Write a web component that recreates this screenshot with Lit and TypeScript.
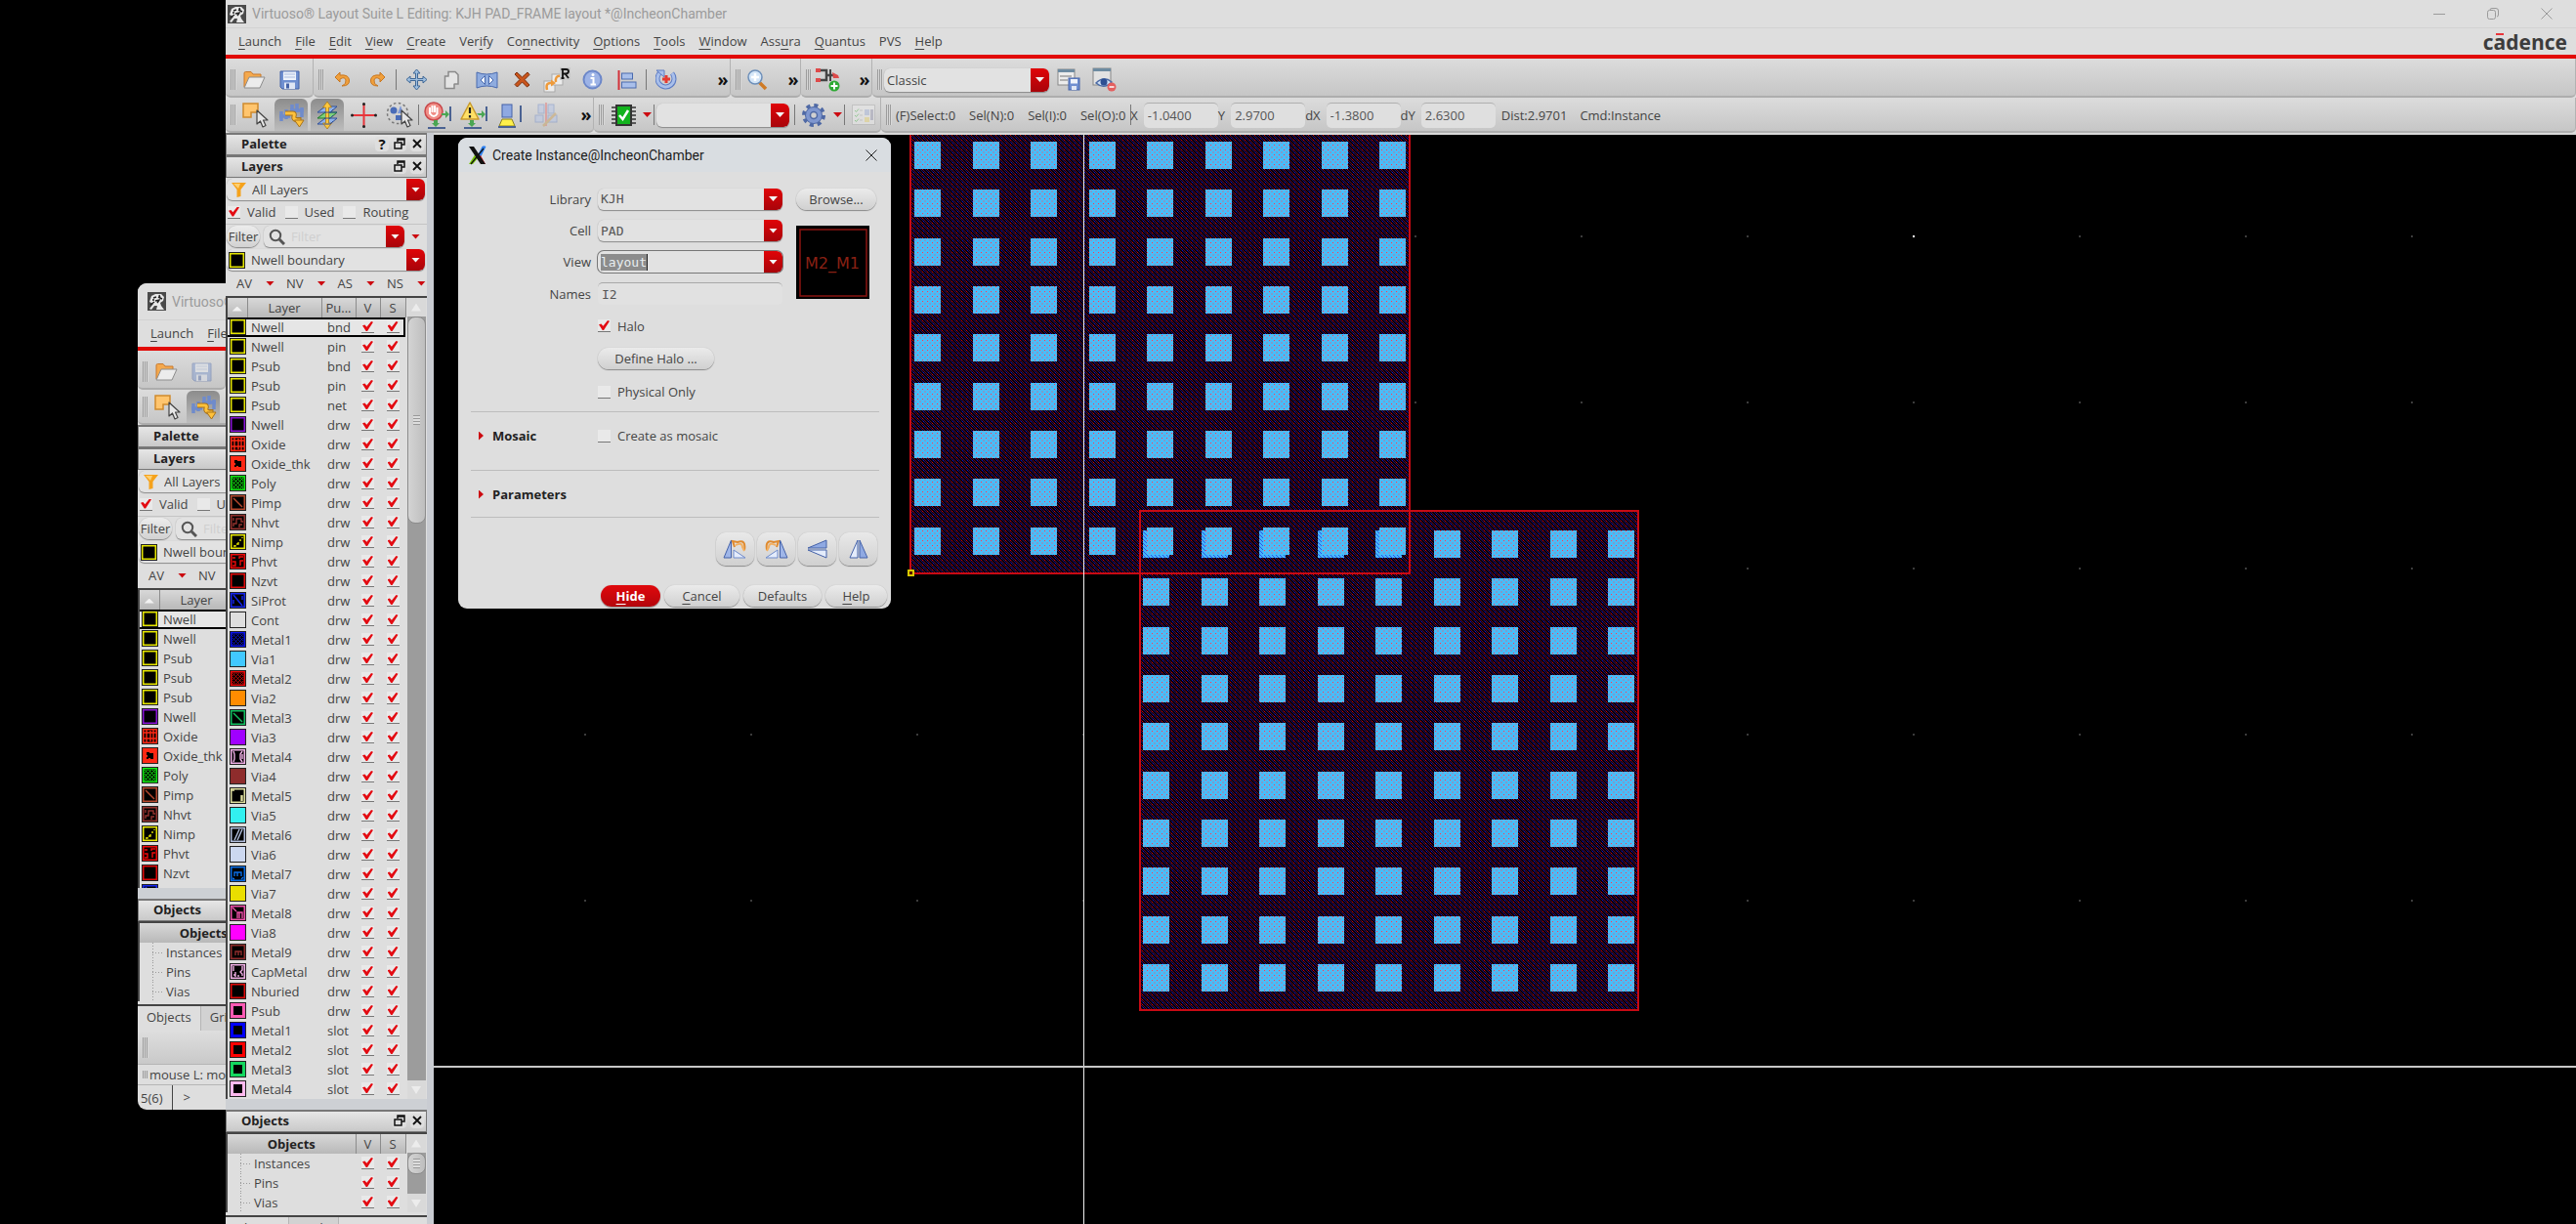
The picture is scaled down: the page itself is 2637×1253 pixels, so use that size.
import { LitElement, html, css, svg, nothing } from "lit";
import { customElement, property } from "lit/decorators.js";
import { classMap } from "lit/directives/class-map.js";

/* ---------- shared look ---------- */

const shared = css`
  * { box-sizing: border-box; }
  button, input, select {
    font: inherit;
    color: inherit;
    margin: 0;
    padding: 0;
    border: 0;
    background: none;
    border-radius: 0;
    appearance: none;
    outline: none;
  }
  svg { display: block; flex: none; }
  u { text-decoration: underline; text-underline-offset: 3px; }
  .combo {
    display: flex;
    height: 22px;
    border-radius: 6px;
    background: #e2e2e2;
    box-shadow: 0 1px 1px #8a8a8a, 0 0 1px #b5b5b5;
    overflow: hidden;
    align-items: center;
  }
  .combo > select, .combo > input { flex: 1; min-width: 0; height: 22px; }
  .drop {
    width: 19px;
    height: 22px;
    flex: none;
    display: grid;
    place-items: center;
    border-radius: 0 5px 5px 0;
    background: linear-gradient(#e00408, #a8040a);
  }
  .drop::before {
    content: "";
    width: 9px;
    height: 5px;
    background: #f4f4f4;
    clip-path: polygon(0 0, 100% 0, 50% 100%);
  }
  .tri {
    display: inline-block;
    width: 9px;
    height: 5px;
    background: #cc0a10;
    clip-path: polygon(0 0, 100% 0, 50% 100%);
    flex: none;
  }
  input[type="checkbox"] {
    width: 13px;
    height: 13px;
    flex: none;
    background: #e9e9e9;
    border-bottom: 1px solid #777;
    display: grid;
    place-items: center;
    overflow: visible;
  }
  input[type="checkbox"]:checked::before {
    content: "";
    width: 11px;
    height: 10px;
    background: #e30b12;
    clip-path: polygon(0 42%, 22% 34%, 40% 58%, 82% 0, 100% 8%, 46% 100%, 34% 100%);
  }
`;

/* A menu caption; the character after "_" is its mnemonic. */
const mnemonic = (s: string) => {
  const i = s.indexOf("_");
  return i < 0 ? s : html`${s.slice(0, i)}<u>${s[i + 1]}</u>${s.slice(i + 2)}`;
};

const ic = (w: number, h: number, body: unknown) =>
  html`<svg width=${w} height=${h} viewBox="0 0 ${w} ${h}" aria-hidden="true">${body}</svg>`;

const cursor = (x: number, y: number) => svg`
  <path transform="translate(${x} ${y})" d="M0 0V14L3.5 11 6 17 9 15.5 6.5 10H11Z" fill="#e6e6e6" stroke="#444" stroke-width="1.2" stroke-linejoin="round"/>`;

const icons = {
  app: ic(19, 19, svg`<rect width="19" height="19" fill="#4a4a4a"/>
    <path d="M2 10L4 4 8 2 14 2 17 5 16 9 13 11 14 14 17 18H9L10 14 7 14 4 18 2 17 6 12Z" fill="#e8e8e8"/>
    <path d="M6 6L9 5M11 5L15 7M8 9L12 8 10 11M3 13L7 10M12 3L13 6M5 8L7 8" stroke="#222" stroke-width="1.4" fill="none"/>`),
  open: ic(24, 20, svg`<path d="M2 17V3Q2 1.500 3.500 1.500H9L11 4H19V8" fill="#f4a94e" stroke="#c9792b"/>
    <path d="M2 18L7 7H23L18 18Z" fill="#ececec" stroke="#8d8d8d"/>`),
  save: ic(21, 20, svg`<path d="M1 1H20V19H3L1 17Z" fill="#6f8fd0" stroke="#4562a8"/>
    <rect x="4" y="1.500" width="13" height="8.500" fill="#eef2fa"/><path d="M5 4H16M5 7H16" stroke="#a9bbdf"/>
    <rect x="5" y="12.500" width="11" height="6.500" fill="#dfe6f4"/><rect x="7" y="13.500" width="3" height="5" fill="#4562a8"/>`),
  undo: ic(17, 17, svg`<path d="M6 1L1 6 6 11V8Q11 5 12 9T8 15Q16 15 15.500 9T6 4Z" fill="#f0a03c" stroke="#c77722"/>`),
  redo: ic(17, 17, svg`<path d="M11 1L16 6 11 11V8Q6 5 5 9T9 15Q1 15 1.500 9T11 4Z" fill="#f0a03c" stroke="#c77722"/>`),
  move: ic(23, 23, svg`<path d="M11.500 1L15 5H12.500V10.500H18V8L22 11.500 18 15V12.500H12.500V18H15L11.500 22 8 18H10.500V12.500H5V15L1 11.500 5 8V10.500H10.500V5H8Z" fill="#9fbfe0" stroke="#3f6795"/>`),
  copy: ic(17, 20, svg`<path d="M5 1.500H12L15 4.500V14H5Z" fill="#e4e4e4" stroke="#8a8a8a" stroke-width="1.500"/>
    <path d="M5 6H1.500V18.500H11V14" fill="#e4e4e4" stroke="#8a8a8a" stroke-width="1.500"/>`),
  stretch: ic(23, 18, svg`<path d="M1 1Q11 5 22 1V17Q11 13 1 17Z" fill="#8facdf" stroke="#4a6aae"/>
    <path d="M9.500 4.500V13.500L5 9ZM13.500 4.500V13.500L18 9Z" fill="#eef3fc" stroke="#4a6aae"/>`),
  del: ic(17, 17, svg`<path d="M3 1L8.500 6 14 1 16 3.500 11 8.500 16 14 13.500 16 8.500 11 3.500 16 1 13.500 6 8.500 1 3Z" fill="#c9551c" stroke="#7c2d0a"/>`),
  rot: ic(29, 28, svg`<rect x="1" y="15" width="11" height="11" fill="#ececec" stroke="#aaa"/>
    <rect x="9" y="8" width="11" height="11" fill="#ececec" stroke="#aaa"/>
    <path d="M4 24Q2 16 9 17M13 16Q12 9 18 10" stroke="#ee9a3a" stroke-width="2.500" fill="none"/>
    <path d="M8 13.500L13 17 8 20.500ZM17 6.500L22 10 17 13.500Z" fill="#ee9a3a"/>
    <rect x="17" y="1" width="11" height="13" fill="#c9c9c9"/><path d="M20 12V3M18.500 3H23.500Q26 3 26 5T23.500 7.500H20M22.500 7.500L26 12M18.500 12H21.500" stroke="#111" stroke-width="1.800" fill="none"/>`),
  info: ic(21, 21, svg`<circle cx="10.500" cy="10.500" r="9" fill="#9db3e6" stroke="#6c87c9" stroke-width="2"/>
    <path d="M8.500 9H11.500V15.500M8.500 15.500H14" stroke="#fff" stroke-width="2" fill="none"/><circle cx="11" cy="5.500" r="1.500" fill="#fff"/>`),
  align: ic(20, 20, svg`<path d="M1.500 0V20" stroke="#d3323a" stroke-width="2"/>
    <rect x="4.500" y="3" width="11" height="6" fill="#a9bfea" stroke="#4a6aae"/><rect x="4.500" y="12" width="14.500" height="6" fill="#a9bfea" stroke="#4a6aae"/>`),
  loop: ic(23, 21, svg`<path d="M5 3A8.500 8.500 0 1 0 17 4" stroke="#5d7cc4" stroke-width="5" fill="none"/>
    <path d="M5 3A8.500 8.500 0 1 0 17 4" stroke="#a9bfea" stroke-width="3" fill="none"/><path d="M1 1H9V8Z" fill="#a9bfea" stroke="#5d7cc4"/>
    <path d="M11 6V14M7 10H15" stroke="#e43b32" stroke-width="3"/>`),
  zoom: ic(21, 22, svg`<path d="M12 13L19 20" stroke="#cf7a25" stroke-width="3.500"/><circle cx="8" cy="8" r="7" fill="#d4e5f7" stroke="#6d8fb9" stroke-width="1.500"/>
    <path d="M8 4V12M4 8H12" stroke="#fff" stroke-width="2.500"/>`),
  tree: ic(25, 25, svg`<path d="M4 3H11V13H4M11 8H18" stroke="#444" stroke-width="2.500" fill="none"/><path d="M15 2V14" stroke="#444" stroke-width="2"/>
    <path d="M0 1H5V5H0ZM0 11H5V15H0ZM17 5L23 8 24 11H18Z" fill="#dd4a4a"/>
    <circle cx="19" cy="19" r="5.500" fill="#2eaa34"/><path d="M19 15.500V22.500M15.500 19H22.500" stroke="#fff" stroke-width="2"/>`),
  formSave: ic(24, 23, svg`<rect x="1" y="1" width="17" height="16" fill="#ececec" stroke="#888"/><rect x="1" y="1" width="17" height="3" fill="#6d8ba1"/>
    <path d="M3 8H15M3 12H11" stroke="#777"/><rect x="12" y="10" width="11" height="12" fill="#6f8fd0" stroke="#4562a8"/><rect x="14" y="11" width="7" height="4.500" fill="#eef2fa"/><rect x="15" y="18" width="5" height="4" fill="#dfe6f4"/>`),
  formEye: ic(25, 25, svg`<rect x="1" y="1" width="18" height="17" fill="#e2e2e2" stroke="#888"/><rect x="1" y="1" width="18" height="3" fill="#6d8ba1"/>
    <path d="M4 16Q12 8 20 15Q12 23 4 16Z" fill="#cfe0f5" stroke="#4b6aa5" stroke-width="1.500"/><circle cx="12" cy="15" r="3.500" fill="#2d4f93"/>
    <circle cx="20" cy="20" r="4.500" fill="#e35f5f"/><path d="M17.500 20H22.500" stroke="#fff" stroke-width="1.500"/>`),
  select: ic(27, 28, svg`<path d="M1 2H16V11H9V16H1Z" fill="#ffc56e" stroke="#d08a2d" stroke-width="1.500"/>${cursor(15, 9)}`),
  snap: ic(27, 26, svg`<path d="M3 9V19M8 7V17M14 2V12M19 1V10M24 5V15M1 14H12M12 8H26" stroke="#6f8bcb" stroke-width="3.500"/>
    <path d="M7 11H15Q17 11 16 14T19 18H21V15" stroke="#a8731a" stroke-width="5" fill="none"/><path d="M7 11H15Q17 11 16 14T19 18H21V20" stroke="#ffc23c" stroke-width="3" fill="none"/>
    <path d="M16.500 18H26L21.500 25Z" fill="#ffc23c" stroke="#a8731a"/>`),
  stack: ic(22, 28, svg`<path d="M9 17H21L14 23H1Z" fill="#8fb1e8" stroke="#2f4f98"/><path d="M9 11H21L14 17H1Z" fill="#7fd07b" stroke="#1e7a28"/><path d="M9 5H21L14 11H1Z" fill="#8fb1e8" stroke="#2f4f98"/>
    <path d="M11 0L15.500 6H12.500V22H15.500L11 28 6.500 22H9.500V6H6.500Z" fill="#ffc73c" stroke="#a8791a" stroke-width=".8"/><path d="M14 11L21 11M8 17H14L17 14M8 23H14L17 20M8 11H14L17 8" stroke="#2f4f98" fill="none"/>`),
  cross: ic(27, 26, svg`<path d="M13.500 1V25M1 13H26" stroke="#e8353b" stroke-width="2"/><g fill="#222"><circle cx="13.500" cy="1.500" r="1.500"/><circle cx="13.500" cy="24.500" r="1.500"/><circle cx="1.500" cy="13" r="1.500"/><circle cx="25.500" cy="13" r="1.500"/></g>`),
  lasso: ic(28, 28, svg`<circle cx="12" cy="12" r="10.500" fill="none" stroke="#777" stroke-width="1.500" stroke-dasharray="2.500 2.500"/>
    <circle cx="8" cy="9" r="3.500" fill="#4a6cb8"/><path d="M15 4L18 12H12Z" fill="#7d98d6"/><rect x="10" y="14" width="6" height="5" fill="#4a6cb8"/>${cursor(16, 9)}`),
  stop: ic(28, 28, svg`<circle cx="10" cy="10" r="9" fill="#f08d86" stroke="#c8474a" stroke-width="1.500"/><path d="M6 13V6M8.500 11V4M11 11V4M13.500 12V6M6 12Q10 18 14 12" stroke="#fff" stroke-width="2" fill="none"/>
    <path d="M18 12H22V9L26 13 22 17V14H18Z" fill="#4aa653"/><path d="M10 19H14V22H16L12 26 8 22H10Z" fill="#4aa653"/><path d="M27 5V20M4 27H22" stroke="#4a6292" stroke-width="2"/>`),
  warn: ic(28, 28, svg`<path d="M10 1L19 18H1Z" fill="#ffe066" stroke="#c99a2c" stroke-width="1.500" stroke-linejoin="round"/><path d="M10 6V12M10 14V16.500" stroke="#222" stroke-width="2.200"/>
    <path d="M17 12H22V9L26 13 22 17V14H19Z" fill="#4aa653"/><path d="M10 19H14V22H16L12 26 8 22H10Z" fill="#4aa653"/><path d="M27 5V20M4 27H22" stroke="#4a6292" stroke-width="2"/>`),
  align2: ic(24, 26, svg`<rect x="4" y="2" width="10" height="13" fill="#8fa9e2" stroke="#4562a8"/><path d="M4 17H14L17 24H1Z" fill="#fff04a" stroke="#8a8120"/><path d="M23 3V20M0 25H18" stroke="#4a6292" stroke-width="2"/>`),
  cut: ic(25, 26, svg`<g opacity=".55"><rect x="1" y="13" width="8" height="7" fill="#b9c7e6" stroke="#8198c9"/><rect x="4" y="2" width="6" height="9" fill="#b9c7e6" stroke="#8198c9"/><rect x="14" y="2" width="6" height="9" fill="#b9c7e6" stroke="#8198c9"/><rect x="14" y="13" width="9" height="7" fill="#b9c7e6" stroke="#8198c9"/>
    <path d="M12 0V24" stroke="#e08080" stroke-width="2"/><path d="M9 24L22 11" stroke="#c9a66b" stroke-width="2.500"/></g>`),
  chip: ic(27, 26, svg`<path d="M1 5H26M1 9H26M1 13H26M1 17H26M1 21H26" stroke="#333" stroke-width="1.500"/><rect x="5" y="2" width="17" height="22" fill="#333"/><rect x="7" y="4" width="13" height="18" fill="#12b31d"/>
    <path d="M9 13L12.500 17 18 8" stroke="#fff" stroke-width="2.500" fill="none"/>`),
  gear: ic(24, 24, svg`<circle cx="12" cy="12" r="10" fill="none" stroke="#4f69a5" stroke-width="4" stroke-dasharray="4 3.850"/><circle cx="12" cy="12" r="8.500" fill="#7f97cf" stroke="#4f69a5"/><circle cx="12" cy="12" r="3.500" fill="#d0d0d0" stroke="#4f69a5" stroke-width="1.500"/>`),
  form: ic(24, 21, svg`<g opacity=".6"><rect x=".5" y=".5" width="23" height="20" fill="#e8e8e8" stroke="#b5b5b5"/><path d="M3 6L4.500 7.500 7 4.500M3 11L4.500 12.500 7 9.500M3 16L4.500 17.500 7 14.500" stroke="#6bbf6b" fill="none"/><path d="M8 6H11M8 11H11M8 16H11" stroke="#bbb"/>
    <rect x="13" y="5" width="5" height="6" fill="#b3bfdc"/><rect x="19" y="5" width="3" height="11" fill="#a9a9bb"/><rect x="13" y="13" width="5" height="5" fill="#e8d88e"/></g>`),
  funnel: ic(15, 15, svg`<path d="M0 0H15L9.500 7V14L5.500 15V7Z" fill="#f5a21c"/><path d="M2 1H9L7 6Z" fill="#ffd071"/>`),
  glass: ic(17, 17, svg`<circle cx="7" cy="7" r="5.200" fill="none" stroke="#555" stroke-width="2"/><path d="M11 11L16 16" stroke="#555" stroke-width="3"/>`),
  float: ic(12, 12, svg`<path d="M4 4V1H11V7H8M4 2H11" stroke="#111" stroke-width="1.500" fill="none"/><rect x="1" y="5" width="7" height="6" fill="#ddd" stroke="#111" stroke-width="1.500"/>`),
  close: ic(10, 10, svg`<path d="M1 1L9 9M9 1L1 9" stroke="#111" stroke-width="1.800"/>`),
  x11: ic(19, 20, svg`<path d="M11 9L15 1H18L13 11Z" fill="#2a7ff0" stroke="#2a7ff0"/><path d="M9 12L13 10 18 19H14Z" fill="#e8252b"/><path d="M1 19L8 8 11 12 5 19Z" fill="#7ac70c"/><path d="M1 1H6L18 19H13Z" fill="#111"/><path d="M16 3L3 19" stroke="#111" stroke-width="1.200"/>`),
  rotL: ic(25, 20, svg`<path d="M8.500 1V19H1Z" fill="#9fb6e8" stroke="#4562a8"/><path d="M11 11L23 19H11Z" fill="#e4ecfb" stroke="#6f8bcb"/><path d="M12 8L10 2 15 3Q24 0 22 11" fill="none" stroke="#e08a2d" stroke-width="2"/><path d="M13 6Q20 3 20 8L22 12" stroke="#f3b061" stroke-width="2" fill="none"/>`),
  rotR: ic(25, 20, svg`<path d="M16.500 1V19H24Z" fill="#9fb6e8" stroke="#4562a8"/><path d="M14 11L2 19H14Z" fill="#e4ecfb" stroke="#6f8bcb"/><path d="M13 8L15 2 10 3Q1 0 3 11" fill="none" stroke="#e08a2d" stroke-width="2"/><path d="M12 6Q5 3 5 8L3 12" stroke="#f3b061" stroke-width="2" fill="none"/>`),
  flipV: ic(21, 20, svg`<path d="M20 1V9H1Z" fill="#8fa9e2" stroke="#4562a8"/><path d="M20 19V11H1Z" fill="#e4ecfb" stroke="#4562a8"/>`),
  flipH: ic(20, 20, svg`<path d="M9 1V19H1Z" fill="#e4ecfb" stroke="#4562a8"/><path d="M11 1V19H19Z" fill="#8fa9e2" stroke="#4562a8"/>`),
};

/* ---------- layer data ---------- */

type Layer = [name: string, purpose: string, color: string, kind: string];
const layers: Layer[] = [
  ["Nwell", "bnd", "#e6e600", "frame"], ["Nwell", "pin", "#e6e600", "frame"], ["Psub", "bnd", "#e6e600", "frame"],
  ["Psub", "pin", "#e6e600", "frame"], ["Psub", "net", "#e6e600", "frame"], ["Nwell", "drw", "#8a12d8", "frame"],
  ["Oxide", "drw", "#ff2814", "cells"], ["Oxide_thk", "drw", "#ff2814", "blob"], ["Poly", "drw", "#12f012", "weave"],
  ["Pimp", "drw", "#b5482e", "slash"], ["Nhvt", "drw", "#93322e", "maze"], ["Nimp", "drw", "#e6e600", "steps"],
  ["Phvt", "drw", "#f00a0a", "notch"], ["Nzvt", "drw", "#e00a0a", "frame"], ["SiProt", "drw", "#1426f0", "dash"],
  ["Cont", "drw", "#dedede", "solid"], ["Metal1", "drw", "#0a14f0", "mesh"], ["Via1", "drw", "#41c8ff", "solid"],
  ["Metal2", "drw", "#f00a0a", "mesh"], ["Via2", "drw", "#ff8c00", "solid"], ["Metal3", "drw", "#12c060", "slash"],
  ["Via3", "drw", "#a000ff", "solid"], ["Metal4", "drw", "#f0b0e6", "side"], ["Via4", "drw", "#8e2c2c", "solid"],
  ["Metal5", "drw", "#dede9e", "corner"], ["Via5", "drw", "#32f0f0", "solid"], ["Metal6", "drw", "#b0bedc", "lean"],
  ["Via6", "drw", "#ccd8f0", "solid"], ["Metal7", "drw", "#0a6ee6", "glyph"], ["Via7", "drw", "#eade00", "solid"],
  ["Metal8", "drw", "#f050aa", "glyph2"], ["Via8", "drw", "#ff00ff", "solid"], ["Metal9", "drw", "#8e2c2c", "glyph3"],
  ["CapMetal", "drw", "#f0b0e6", "cap"], ["Nburied", "drw", "#e00a0a", "frame"], ["Psub", "drw", "#ff5ab4", "dot"],
  ["Metal1", "slot", "#0000ff", "dot"], ["Metal2", "slot", "#ff0000", "dot"], ["Metal3", "slot", "#14d75f", "dot"],
  ["Metal4", "slot", "#ffb9ee", "dot"],
];

const art: Record<string, string> = {
  cells: "M5 2V15M9 3V14M12 2V15M2 5H15M2 11H15",
  slash: "M4 4L13 13",
  maze: "M4 13V10H7V5H12V8H14M4 4V7M10 14V11H13",
  steps: "M4 13H6V12M7 11H9V9M11 8V6M13 5V4",
  notch: "M3 5H6M3 9H6V13H3M14 4H10V6M14 8H11V13",
  dash: "M4 3L13 14M4 8V12M13 4V8",
  side: "M4 3L5 6V11L4 14M13 3L11 6V11L13 14M13 6V11",
  corner: "M12 14V8M13 14V8M2 3H5",
  lean: "M5 14L10 3M8 14L13 3",
  glyph: "M5 11V7H12V11M8 7V11M3 13L5 14M14 12L12 14",
  glyph2: "M3 3L7 7M8 14V8H13V14M10 8V14",
  glyph3: "M6 12V8H12V12M9 8V12",
  cap: "M4 3V8M4 12H6V9M13 3V7L11 9 13 11V13M6 14V12M9 14V12",
};

const swatch = (c: string, kind: string) => {
  const body =
    kind === "solid" ? nothing :
    kind === "dot" ? svg`<rect x="4" y="4" width="9" height="9" fill="#000"/>` :
    kind === "blob" ? svg`<path d="M5 5H8V6H12V12H9V11H7V12H5V10H6V8H5Z" fill="#000"/>` :
    kind === "weave" || kind === "mesh"
      ? svg`<rect x="2.500" y="2.500" width="12" height="12" fill="#000"/><path d="M3 3L14 14M7 3L14 10M11 3L14 6M3 7L10 14M3 11L6 14M14 3L3 14M10 3L3 10M6 3L3 6M14 7L7 14M14 11L11 14" stroke=${c} stroke-width=${kind === "weave" ? 1 : 0.700}/>`
      : svg`<rect x="2.500" y="2.500" width="12" height="12" fill="#000"/><path d=${art[kind] ?? ""} stroke=${c} stroke-width="1.400" fill="none"/>`;
  return ic(17, 17, svg`<rect x=".5" y=".5" width="16" height="16" fill=${c} stroke="#222"/>${body}`);
};

/* ---------- docked palette ---------- */

@customElement("layer-dock")
class LayerDock extends LitElement {
  @property({ type: Boolean, reflect: true }) narrow = false;

  static styles = [shared, css`
    :host { display: flex; flex-direction: column; width: 206px; flex: none; background: #dedede; }
    :host([narrow]) { flex: 1; min-height: 0; }
    .head {
      display: flex;
      align-items: center;
      height: 23px;
      flex: none;
      padding: 0 2px 2px 15px;
      gap: 4px;
      border: 1px solid #777;
      border-top: 2px solid #777;
      background: linear-gradient(#e6e6e6, #c9c9c9);
      font-weight: 700;
      color: #222;
    }
    .head h2 { font-size: 13px; margin: 0 auto 0 0; }
    .head button {
      width: 14px;
      height: 15px;
      display: grid;
      place-items: center;
      border-radius: 4px;
      background: #dedede;
      font-size: 15px;
      line-height: 15px;
      font-weight: 700;
      color: #111;
    }
    .line { display: flex; align-items: center; height: 24px; flex: none; padding: 0 2px 0 1px; }
    .line .combo { flex: 1; padding-left: 5px; gap: 6px; }
    .line .combo.entry { padding-left: 2px; }
    .checks { gap: 7px; border-bottom: 1px solid #c4c4c4; padding: 0 2px 1px; }
    .checks label { display: flex; align-items: center; gap: 7px; margin-right: 2px; }
    .filter { gap: 4px; }
    .pill { height: 22px; width: 34px; border-radius: 11px; background: linear-gradient(#ececec, #d2d2d2); box-shadow: 0 1px 1px #888, 0 0 1px #999; }
    .filter .combo { flex: none; width: 144px; margin-right: 3px; }
    .filter input::placeholder { color: #cfcfcf; }
    .sets { height: 25px; padding: 0 3px 1px 11px; gap: 12px; }
    .sets button { display: flex; align-items: center; gap: 14px; }
    .view { display: flex; flex: none; overflow: hidden; border-left: 2px solid #444; border-top: 2px solid #444; }
    :host([narrow]) .layers { flex: 1; min-height: 0; align-items: flex-start; }
    table { border-collapse: collapse; table-layout: fixed; width: 182px; flex: none; }
    th { height: 20px; padding: 0 0 1px; font-weight: 400; line-height: 18px; background: linear-gradient(#d8d8d8, #b8b8b8); border-right: 1px solid #8c8c8c; }
    th.strong { font-weight: 700; color: #222; }
    td { height: 20px; padding: 0 0 1px; line-height: 18px; }
    td.name { padding-left: 4px; }
    td.pur { padding-left: 6px; }
    td svg { margin-left: 2px; }
    td input { margin: 0 auto; }
    tr.on td { background: #e6e6e6; box-shadow: inset 0 2px #000, inset 0 -2px #000; }
    tr.on td:last-child { box-shadow: inset 0 2px #000, inset 0 -2px #000, inset -2px 0 #000; }
    .caret { display: block; margin: 3px auto 0; width: 10px; height: 5px; background: #f2f2f2; clip-path: polygon(50% 0, 100% 100%, 0 100%); }
    .bar { width: 19px; flex: none; display: flex; flex-direction: column; background: #9c9c9c; margin-left: 1px; }
    .bar .end { height: 19px; background: #d9d9d9; display: grid; place-items: center; }
    .bar .end::before { content: ""; width: 10px; height: 8px; background: #ececec; clip-path: polygon(50% 0, 100% 100%, 0 100%); }
    .bar .end.down { margin-top: auto; }
    .bar .end.down::before { transform: rotate(180deg); }
    .thumb { height: 212px; border-radius: 8px; background: linear-gradient(90deg, #d4d4d4, #bebebe); border: 1px solid #8c8c8c; display: grid; place-items: center; }
    .short .thumb { height: 22px; }
    .thumb::before { content: ""; width: 7px; height: 10px; background: repeating-linear-gradient(#999 0 1px, #ddd 1px 3px); }
    .split { height: 11px; flex: none; background: #cdd0d4; }
    .tree td.name { padding-left: 27px; background: repeating-linear-gradient(#999 0 1px, transparent 1px 3px) 13px 0 / 1px 100% no-repeat, repeating-linear-gradient(90deg, #999 0 1px, transparent 1px 3px) 13px 10px / 11px 1px no-repeat; }
    .tabs { display: flex; height: 27px; flex: none; border-top: 2px solid #444; margin-top: 3px; }
    .tabs button { padding: 0 9px 4px 9px; height: 25px; border-right: 1px solid #b5b5b5; }
    .tabs button + button { background: #d2d2d2; }
  `];

  private head(name: string, help = false) {
    return html`<div class="head"><h2>${name}</h2>
      ${this.narrow ? nothing : html`
        ${help ? html`<button aria-label="Palette help">?</button>` : nothing}
        <button aria-label="Undock ${name}">${icons.float}</button>
        <button aria-label="Close ${name}">${icons.close}</button>`}</div>`;
  }

  private ticks(name: string) {
    return this.narrow ? nothing : html`
      <td><input type="checkbox" checked aria-label="${name} visible"></td>
      <td><input type="checkbox" checked aria-label="${name} selectable"></td>`;
  }

  render() {
    const n = this.narrow;
    const rows = n ? layers.slice(0, 15) : layers;
    return html`
      ${this.head("Palette", true)}${this.head("Layers")}
      <div class="line"><div class="combo">${icons.funnel}
        <select aria-label="Layer set"><option>All Layers</option></select><span class="drop"></span></div></div>
      <div class="line checks">
        <label><input type="checkbox" checked>Valid</label>
        <label><input type="checkbox">Used</label>
        ${n ? nothing : html`<label><input type="checkbox">Routing</label>`}
      </div>
      <div class="line filter"><button class="pill">Filter</button>
        <div class="combo">${icons.glass}<input type="text" placeholder="Filter" aria-label="Filter layers"><span class="drop"></span></div>
        <span class="tri"></span></div>
      <div class="line"><div class="combo entry">${swatch("#e6e600", "frame")}
        <select aria-label="Entry layer"><option>Nwell boundary</option></select><span class="drop"></span></div></div>
      <div class="line sets">${(n ? ["AV", "NV"] : ["AV", "NV", "AS", "NS"]).map((s) => html`<button>${s}<span class="tri"></span></button>`)}</div>
      <div class="view layers">
        <table>
          <colgroup><col style="width:20px"><col style="width:76px"><col style="width:35px"><col style="width:25px"><col style="width:26px"></colgroup>
          <thead><tr><th aria-label="Sort"><span class="caret"></span></th><th>Layer</th>
            ${n ? nothing : html`<th>Pu...</th><th>V</th><th>S</th>`}</tr></thead>
          <tbody>${rows.map(([name, pur, c, kind], i) => html`
            <tr class=${classMap({ on: i === 0 })}><td>${swatch(c, kind)}</td><td class="name">${name}</td>
              ${n ? nothing : html`<td class="pur">${pur}</td>`}${this.ticks(`${name} ${pur}`)}</tr>`)}</tbody>
        </table>
        ${n ? nothing : html`<div class="bar"><span class="end"></span><span class="thumb"></span><span class="end down"></span></div>`}
      </div>
      <div class="split"></div>
      ${this.head("Objects")}
      <div class="view short">
        <table class="tree">
          <colgroup><col style="width:131px"><col style="width:25px"><col style="width:26px"></colgroup>
          <thead><tr><th class="strong">Objects</th>${n ? nothing : html`<th>V</th><th>S</th>`}</tr></thead>
          <tbody>${["Instances", "Pins", "Vias"].map((o) => html`<tr><td class="name">${o}</td>${this.ticks(o)}</tr>`)}</tbody>
        </table>
        ${n ? nothing : html`<div class="bar"><span class="end"></span><span class="thumb"></span><span class="end down"></span></div>`}
      </div>
      <div class="tabs"><button>Objects</button><button>Grids</button></div>`;
  }
}

/* ---------- layout canvas ---------- */

@customElement("layout-canvas")
class LayoutCanvas extends LitElement {
  static styles = css`
    :host { display: block; flex: 1; min-width: 0; background: #000; border-top: 2px solid #d8d8d8; overflow: hidden; }
    svg { display: block; width: 100%; height: 100%; }
  `;

  /* Outline and hatched metal of one pad array. */
  private pad(x: number, y: number, w: number, h: number) {
    return svg`<rect x=${x} y=${y} width=${w} height=${h} fill="url(#metal)" stroke="#c80a14" stroke-width="2"/>`;
  }

  /* Grid of via cuts, nine to a row. */
  private cuts(x: number, y: number, rows: number, fill: string, cols = 9) {
    const out = [];
    for (let r = 0; r < rows; r++)
      for (let c = 0; c < cols; c++)
        out.push(svg`<rect x=${x + Math.round(c * 59.500)} y=${y + Math.round(r * 49.350)} width="27" height="28" fill=${fill}/>`);
    return out;
  }

  render() {
    const dots = [];
    for (let i = -3; i < 9; i++)
      for (let j = 0; j < 6; j++)
        dots.push(svg`<rect x=${664 + i * 170} y=${953 - j * 170} width="2" height="2" fill=${i === 5 && (j === 0 || j === 5) ? "#fff" : "#3c3c3c"}/>`);
    return html`<svg role="img" aria-label="Layout view">
      <defs>
        <pattern id="metal" width="5" height="5" patternUnits="userSpaceOnUse">
          <rect width="5" height="5" fill="#040006"/>
          <g fill="#5a0a22"><rect x="1" y="1" width="1" height="1"/><rect x="2" y="2" width="1" height="1"/><rect x="3" y="3" width="1" height="1"/><rect x="4" y="4" width="1" height="1"/></g>
          <rect width="1" height="1" fill="#d0000c"/>
          <g fill="#1e0c66"><rect x="3" y="0" width="1" height="1"/><rect x="4" y="1" width="1" height="1"/><rect x="0" y="2" width="1" height="1"/><rect x="2" y="4" width="1" height="1"/></g>
          <rect x="1" y="3" width="1" height="1" fill="#1212d0"/>
        </pattern>
        <pattern id="via" width="5" height="5" patternUnits="userSpaceOnUse">
          <rect width="5" height="5" fill="#46befa"/>
          <rect width="1" height="1" fill="#e04468"/><rect x="1" y="0" width="1" height="1" fill="#7fa6d6"/><rect x="0" y="1" width="1" height="1" fill="#7fa6d6"/>
          <rect x="2" y="2" width="2" height="2" fill="#7d9ccc"/>
        </pattern>
        <pattern id="fringe" width="4" height="4" patternUnits="userSpaceOnUse">
          <rect width="4" height="4" fill="#46b6fa"/><path d="M0 0L4 4" stroke="#2a56e6" stroke-width="1"/>
        </pattern>
      </defs>
      ${dots}
      ${this.pad(488, -20, 511, 469)}
      ${this.pad(723, 385, 510, 511)}
      ${this.cuts(726, 405, 10, "url(#via)")}
      ${this.cuts(726, 405, 1, "url(#fringe)", 5)}
      ${this.cuts(492, 7, 9, "url(#via)")}
      <path d="M999 0V449H488" stroke="#c80a14" stroke-width="2" fill="none"/>
      <path d="M723 449V385H999" stroke="#c80a14" stroke-width="2" fill="none"/>
      <rect x="665" y="0" width="1" height="100%" fill="#f0f0f0"/>
      <rect x="0" y="953" width="100%" height="2" fill="#c8c8c8"/>
      <rect x="486" y="446" width="5" height="5" fill="#500" stroke="#d8c800" stroke-width="2"/>
    </svg>`;
  }
}

/* ---------- editor window ---------- */

@customElement("editor-window")
class EditorWindow extends LitElement {
  @property() caption = "";
  @property({ type: Boolean, reflect: true }) narrow = false;

  static styles = [shared, css`
    :host { display: flex; flex-direction: column; overflow: hidden; background: #dedede; }
    :host([narrow]) { border-radius: 9px 0 0 9px; }
    header { display: flex; align-items: center; height: 28px; flex: none; padding: 0 24px 0 2px; gap: 6px; background: #dedede; color: #9b9b9b; }
    :host([narrow]) header { height: 37px; padding-left: 10px; }
    header h1 { font: 400 14px/20px Roboto, "Open Sans", sans-serif; margin: 0 auto 0 0; white-space: nowrap; }
    header button { width: 12px; height: 12px; margin-left: 37px; }
    nav { display: flex; align-items: center; height: 28px; flex: none; padding: 0 9px 2px 13px; gap: 14px; border-top: 1px solid #d2d2d2; }
    nav button { flex: none; line-height: 18px; }
    .logo { margin: 2px 0 0 auto; font-size: 21px; line-height: 20px; font-weight: 700; color: #3c3c3c; flex: none; }
    .logo span { position: relative; }
    .logo span::before { content: ""; position: absolute; left: 2px; right: 2px; top: 5px; height: 2px; background: #e8353b; }
    .rule { height: 4px; flex: none; background: #e20a06; }
    .row { display: flex; height: 40px; flex: none; overflow: hidden; }
    .row.low { height: 36px; }
    .group {
      display: flex;
      align-items: center;
      flex: none;
      gap: 2px;
      padding: 5px 0 0 5px;
      background: linear-gradient(#dcdcdc, #c6c6c6);
      border-bottom: 2px solid #adadad;
      border-right: 1px solid #b2b2b2;
      border-radius: 0 0 5px 5px;
    }
    .low .group { gap: 3px; padding-top: 1px; }
    .a { width: 90px; } .b { width: 427px; } .c { width: 72px; } .d { width: 73px; }
    .f { width: 377px; } .g { width: 294px; }
    .rest { flex: 1; min-width: 0; }
    .grip { width: 6px; height: 21px; flex: none; margin-right: -1px; background: repeating-linear-gradient(90deg, #9c9c9c 0 1px, #d8d8d8 1px 2px); }
    .c .grip, .d .grip { margin-right: -3px; }
    .tool { width: 34px; height: 34px; display: grid; place-items: center; flex: none; }
    .tool.down { background: linear-gradient(#8c8c8c, #bdbdbd); border-radius: 6px 6px 0 0; align-self: stretch; height: auto; }
    .tool.off { opacity: .4; }
    .sep { width: 1px; height: 21px; background: #777; flex: none; margin: 0 1px 0 0; }
    .low .sep { margin: 0 -1px; }
    .more { margin: 0 1px 2px auto; width: 12px; font-size: 18px; line-height: 20px; font-weight: 700; color: #111; }
    .row .combo { width: 169px; height: 24px; padding-left: 3px; margin-right: 1px; }
    .row .drop { height: 24px; }
    .low .combo { width: 136px; margin-right: 3px; }
    .sel { margin: 0 9px 0 2px; flex: none; }
    .sel:nth-of-type(5) { margin-right: 3px; }
    .pos { display: flex; align-items: center; gap: 6px; margin-left: -3px; flex: none; }
    .pos input { width: 76px; height: 26px; border-radius: 5px; background: #dfdfdf; border-top: 1px solid #b0b0b0; padding-left: 4px; color: #555; }
    .stat { margin: 0 7px 0 3px; flex: none; }
    main { display: flex; flex: 1; min-height: 0; }
    .gutter { width: 7px; flex: none; background: #c9ccd2; }
    .foot { display: flex; align-items: center; flex: none; white-space: nowrap; padding-left: 5px; gap: 2px; border-bottom: 1px solid #b5b5b5; }
    .foot.tools { height: 35px; background: linear-gradient(#dedede, #c9c9c9); }
    .foot.mouse { height: 21px; }
    .foot.cmd { height: 25px; padding-left: 3px; gap: 9px; border: 0; }
    .foot.cmd span + span { border-left: 1px solid #444; padding-left: 11px; line-height: 25px; }
    .foot .grip.small { height: 8px; }
  `];

  private tool(name: string, icon: unknown, cls = "") {
    return html`<button class="tool ${cls}" aria-label=${name}>${icon}</button>`;
  }

  private menus = ["_Launch", "_File", "_Edit", "_View", "_Create", "Ver_ify", "Co_nnectivity", "_Options", "_Tools", "_Window", "Ass_ura", "_Quantus", "PVS", "_Help"];

  render() {
    const n = this.narrow;
    const t = this.tool;
    return html`
      <header>${icons.app}<h1>${this.caption}</h1>
        ${n ? nothing : html`
          <button aria-label="Minimize">${ic(12, 12, svg`<path d="M0 6.500H12" stroke="#9a9a9a"/>`)}</button>
          <button aria-label="Restore">${ic(12, 12, svg`<rect x=".5" y="2.500" width="8" height="9" rx="2" fill="none" stroke="#9a9a9a"/><path d="M3 2Q3 .5 5 .5H9Q11.500 .5 11.500 3V7Q11.500 9 10 9" fill="none" stroke="#9a9a9a"/>`)}</button>
          <button aria-label="Close">${ic(12, 12, svg`<path d="M.5 .5L11.500 11.500M11.500 .5L.5 11.500" stroke="#9a9a9a"/>`)}</button>`}
      </header>
      <nav>${(n ? this.menus.slice(0, 2) : this.menus).map((m) => html`<button>${mnemonic(m)}</button>`)}
        ${n ? nothing : html`<span class="logo">c<span>a</span>dence</span>`}</nav>
      <div class="rule"></div>
      <div class="row">
        <div class="group a"><span class="grip"></span>${t("Open", icons.open)}${t("Save", icons.save, n ? "off" : "")}</div>
        ${n ? nothing : html`
        <div class="group b"><span class="grip"></span>${t("Undo", icons.undo)}${t("Redo", icons.redo)}<span class="sep"></span>
          ${t("Move", icons.move)}${t("Copy", icons.copy)}${t("Stretch", icons.stretch)}${t("Delete", icons.del)}${t("Rotate", icons.rot)}${t("Properties", icons.info)}${t("Align", icons.align)}<span class="sep"></span>
          ${t("Repeat", icons.loop)}<button class="more">»</button></div>
        <div class="group c"><span class="grip"></span>${t("Zoom", icons.zoom)}<button class="more">»</button></div>
        <div class="group d"><span class="grip"></span>${t("Add hierarchy", icons.tree)}<button class="more">»</button></div>
        <div class="group rest"><span class="grip"></span>
          <div class="combo"><select aria-label="Workspace"><option>Classic</option></select><span class="drop"></span></div>
          ${t("Save workspace", icons.formSave)}${t("Hide workspace", icons.formEye)}</div>`}
      </div>
      <div class="row low">
        <div class="group f"><span class="grip"></span>${t("Select", icons.select)}${t("Snap", icons.snap, "down")}
          ${n ? nothing : html`${t("Levels", icons.stack, "down")}${t("Crosshair", icons.cross)}${t("Area select", icons.lasso)}<span class="sep"></span>
          ${t("Stop on violation", icons.stop)}${t("Warn on violation", icons.warn)}${t("Align edge", icons.align2)}${t("Cut", icons.cut)}<button class="more">»</button>`}</div>
        ${n ? nothing : html`
        <div class="group g"><span class="grip"></span>${t("Check design", icons.chip)}<span class="tri"></span><span class="sep"></span>
          <div class="combo"><input type="text" aria-label="Rule set"><span class="drop"></span></div><span class="sep"></span>
          ${t("Options", icons.gear)}<span class="tri"></span><span class="sep"></span>${t("Form", icons.form)}</div>
        <div class="group rest"><span class="grip"></span>
          ${["(F)Select:0", "Sel(N):0", "Sel(I):0", "Sel(O):0"].map((s) => html`<span class="sel">${s}</span>`)}<span class="sep"></span>
          ${[["X", "-1.0400"], ["Y", "2.9700"], ["dX", "-1.3800"], ["dY", "2.6300"]].map(([k, v]) => html`<label class="pos">${k}<input type="text" .value=${v}></label>`)}
          <span class="stat">Dist:2.9701</span><span class="stat">Cmd:Instance</span></div>`}
      </div>
      <main><layer-dock ?narrow=${n}></layer-dock>${n ? nothing : html`<div class="gutter"></div><layout-canvas></layout-canvas>`}</main>
      ${n ? html`
        <div class="foot tools"><span class="grip"></span></div>
        <div class="foot mouse"><span class="grip small"></span><span>mouse L: mo</span></div>
        <div class="foot cmd"><span>5(6)</span><span>&gt;</span></div>` : nothing}`;
  }
}

/* ---------- create-instance form ---------- */

@customElement("instance-dialog")
class InstanceDialog extends LitElement {
  static styles = [shared, css`
    :host { display: block; width: 443px; border-radius: 9px; overflow: hidden; background: #dedede; color: #444; }
    header { display: flex; align-items: center; gap: 6px; height: 35px; padding: 0 14px 0 10px; background: #d9dde1; color: #1c1c1c; }
    h1 { font: 400 14px/20px Roboto, "Open Sans", sans-serif; margin: 0 auto 0 0; }
    .form { display: grid; grid-template-columns: 136px 189px 82px; column-gap: 7px; grid-template-rows: 33px 32px 32px 33px 33px 34px 34px; align-items: center; padding-top: 11px; }
    .form > .lab { grid-column: 1; text-align: right; }
    .form > .val { grid-column: 2; }
    .form > .side { grid-column: 3; margin-left: 7px; }
    .combo > input, .names { font: 13px "DejaVu Sans Mono", "Liberation Mono", monospace; color: #555; }
    .combo { padding-left: 3px; }
    .combo.focus { box-shadow: 0 0 0 1px #777; }
    .combo.focus input { flex: none; width: 48px; height: 17px; background: #8c8c8c; color: #e8eef0; border-right: 1px solid #222; }
    .combo .drop { margin-left: auto; }
    .names { height: 23px; width: 189px; border-radius: 5px; background: #e1e1e1; border-top: 1px solid #a8a8a8; padding-left: 4px; }
    .tick { display: flex; align-items: center; gap: 7px; }
    .pill { height: 22px; border-radius: 11px; background: linear-gradient(#ebebeb, #d0d0d0); box-shadow: 0 1px 1px #8a8a8a, 0 0 1px #aaa; white-space: nowrap; }
    .browse { width: 82px; }
    .halo { width: 119px; }
    .preview { grid-row: 2 / span 3; width: 75px; height: 75px; }
    .preview text { font: 16px "DejaVu Sans", sans-serif; fill: #8a2014; }
    section { margin: 0 12px 0 13px; height: 48px; padding-top: 14px; border-top: 1px solid #bdbdbd; display: flex; align-items: flex-start; line-height: 20px; }
    section.mosaic { margin-top: 3px; height: 60px; }
    section h2 { font-size: 13px; line-height: 20px; margin: 0; width: 108px; color: #222; display: flex; align-items: center; gap: 9px; }
    section h2::before { content: ""; width: 5px; height: 9px; background: #cc0a10; clip-path: polygon(0 0, 100% 50%, 0 100%); margin-left: 8px; }
    section .tick { margin-left: 22px; }
    .turns { margin: 0 12px 0 13px; border-top: 1px solid #bdbdbd; padding: 15px 2px 0 0; display: flex; justify-content: flex-end; gap: 3px; }
    .turns button { width: 39px; height: 34px; border-radius: 10px; display: grid; place-items: center; background: linear-gradient(#e9e9e9, #d0d0d0); box-shadow: 0 1px 1px #8a8a8a, 0 0 1px #aaa; }
    footer { display: flex; justify-content: flex-end; gap: 4px; padding: 20px 4px 2px 0; }
    .hide { width: 61px; background: linear-gradient(#e0080c, #b4060c); color: #fff; font-weight: 700; }
    .cancel { width: 77px; } .defaults { width: 80px; } .help { width: 63px; }
  `];

  render() {
    return html`
      <header>${icons.x11}<h1>Create Instance@IncheonChamber</h1>
        <button aria-label="Close">${ic(12, 12, svg`<path d="M.5 .5L11.500 11.500M11.500 .5L.5 11.500" stroke="#222"/>`)}</button></header>
      <div class="form">
        <label class="lab" for="lib">Library</label>
        <div class="val combo"><input id="lib" type="text" value="KJH"><span class="drop"></span></div>
        <button class="side pill browse">Browse...</button>
        <label class="lab" for="cell">Cell</label>
        <div class="val combo"><input id="cell" type="text" value="PAD"><span class="drop"></span></div>
        <svg class="side preview" viewBox="0 0 75 75" role="img" aria-label="Cell preview"><rect width="75" height="75"/>
          <rect x="4" y="4" width="68" height="68" fill="none" stroke="#8a1410" stroke-width="1.500"/><text x="37" y="44" text-anchor="middle">M2_M1</text></svg>
        <label class="lab" for="view">View</label>
        <div class="val combo focus"><input id="view" type="text" value="layout"><span class="drop"></span></div>
        <label class="lab" for="names">Names</label>
        <input class="val names" id="names" type="text" value="I2">
        <label class="val tick"><input type="checkbox" checked>Halo</label>
        <button class="val pill halo">Define Halo ...</button>
        <label class="val tick"><input type="checkbox">Physical Only</label>
      </div>
      <section class="mosaic"><h2>Mosaic</h2><label class="tick"><input type="checkbox">Create as mosaic</label></section>
      <section><h2>Parameters</h2></section>
      <div class="turns">
        <button aria-label="Rotate left">${icons.rotL}</button><button aria-label="Rotate right">${icons.rotR}</button>
        <button aria-label="Flip vertical">${icons.flipV}</button><button aria-label="Flip horizontal">${icons.flipH}</button></div>
      <footer>
        <button class="pill hide">${mnemonic("_Hide")}</button><button class="pill cancel">${mnemonic("_Cancel")}</button>
        <button class="pill defaults">Defaults</button><button class="pill help">${mnemonic("_Help")}</button></footer>`;
  }
}

/* ---------- desktop ---------- */

@customElement("app-root")
class AppRoot extends LitElement {
  static styles = css`
    :host { display: block; position: relative; height: 100vh; overflow: hidden; background: #000; color: #444; font: 13px/18px "Open Sans", "Noto Sans", sans-serif; }
    editor-window, instance-dialog { position: absolute; }
    .back { left: 141px; top: 290px; width: 98px; height: 846px; }
    .front { left: 231px; right: 0; top: 0; bottom: 0; }
    .form { left: 469px; top: 141px; }
  `;

  render() {
    return html`
      <editor-window class="back" narrow caption="Virtuoso®"></editor-window>
      <editor-window class="front" caption="Virtuoso® Layout Suite L Editing: KJH PAD_FRAME layout *@IncheonChamber"></editor-window>
      <instance-dialog class="form"></instance-dialog>`;
  }
}
